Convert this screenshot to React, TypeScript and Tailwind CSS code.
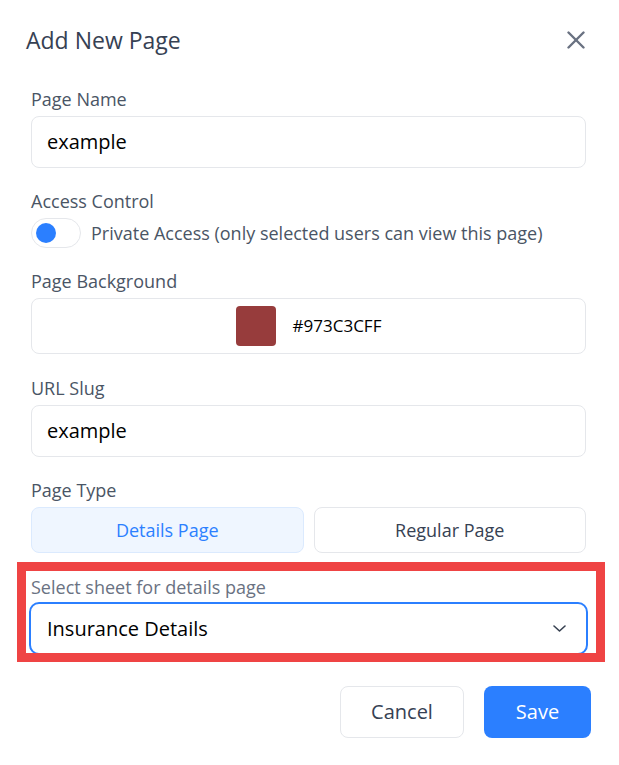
import React from 'react';

const font = { fontFamily: '"Open Sans", "Noto Sans", sans-serif' };

const Label: React.FC<{ children: React.ReactNode }> = ({ children }) => (
  <div className="h-6 leading-6 text-[18px] text-gray-600">{children}</div>
);

const TextField: React.FC<{ value: string }> = ({ value }) => (
  <div className="mt-[5px] h-[52px] flex items-center px-[15px] rounded-lg border border-gray-200 bg-white text-[20px] text-black">
    {value}
  </div>
);

export default function App() {
  return (
    <div className="w-[619px] h-[765px] bg-white" style={font}>
      {/* Header */}
      <div className="flex items-center justify-between h-10 mt-5 pl-[26px] pr-[34px]">
        <h2 className="text-[23px] text-gray-700">Add New Page</h2>
        <button className="text-gray-500">
          <svg width="18" height="18" viewBox="0 0 18 18" fill="none" stroke="currentColor" strokeWidth="2.4" strokeLinecap="round">
            <path d="M1.5 1.5 16.5 16.5" />
            <path d="M16.5 1.5 1.5 16.5" />
          </svg>
        </button>
      </div>

      <div className="pl-[31px] pr-[33px]">
        {/* Page Name */}
        <div className="mt-[27px]">
          <Label>Page Name</Label>
          <TextField value="example" />
        </div>

        {/* Access Control */}
        <div className="mt-[21px]">
          <Label>Access Control</Label>
          <div className="mt-[5px] flex items-center gap-[10px]">
            <div className="w-[50px] h-[30px] rounded-full border border-gray-200 bg-white flex items-center pl-1">
              <div className="w-5 h-5 rounded-full bg-blue-500" />
            </div>
            <span className="text-[18px] text-gray-600">Private Access (only selected users can view this page)</span>
          </div>
        </div>

        {/* Page Background */}
        <div className="mt-[21px]">
          <Label>Page Background</Label>
          <div className="mt-[5px] h-14 rounded-lg border border-gray-200 bg-white flex items-center justify-center gap-[17px]">
            <div className="w-10 h-10 rounded bg-[#973c3c]" />
            <span className="text-[17px] text-black">#973C3CFF</span>
          </div>
        </div>

        {/* URL Slug */}
        <div className="mt-[22px]">
          <Label>URL Slug</Label>
          <TextField value="example" />
        </div>

        {/* Page Type */}
        <div className="mt-[21px]">
          <Label>Page Type</Label>
          <div className="mt-[5px] grid grid-cols-2 gap-[10px]">
            <button className="h-[46px] rounded-lg border border-blue-100 bg-blue-50 text-[18px] text-blue-500">
              Details Page
            </button>
            <button className="h-[46px] rounded-lg border border-gray-200 bg-white text-[18px] text-gray-700">
              Regular Page
            </button>
          </div>
        </div>

        {/* Sheet select (highlighted) */}
        <div className="relative mt-[22px]">
          <div className="h-6 leading-6 text-[18px] text-gray-500">Select sheet for details page</div>
          <div className="mt-[3px] -mx-[2px] h-[53px] flex items-center justify-between pl-[16px] pr-[20px] rounded-[10px] border-2 border-blue-500 bg-white">
            <span className="text-[20px] text-black">Insurance Details</span>
            <svg width="13" height="7" viewBox="0 0 13 7" fill="none" stroke="#374151" strokeWidth="1.6" strokeLinecap="round" strokeLinejoin="round">
              <path d="M1 1l5.5 5 5.5-5" />
            </svg>
          </div>
          <div className="pointer-events-none absolute -top-[13px] -bottom-[7px] -left-[14px] -right-[19px] border-[9px] border-[#ef4444]" />
        </div>

        {/* Footer */}
        <div className="mt-[31px] flex justify-end gap-5 -mr-[5px]">
          <button className="w-[124px] h-[52px] rounded-lg border border-gray-200 bg-white text-[20px] text-gray-700">
            Cancel
          </button>
          <button className="w-[107px] h-[52px] rounded-lg bg-blue-500 text-[20px] text-white">
            Save
          </button>
        </div>
      </div>
    </div>
  );
}
